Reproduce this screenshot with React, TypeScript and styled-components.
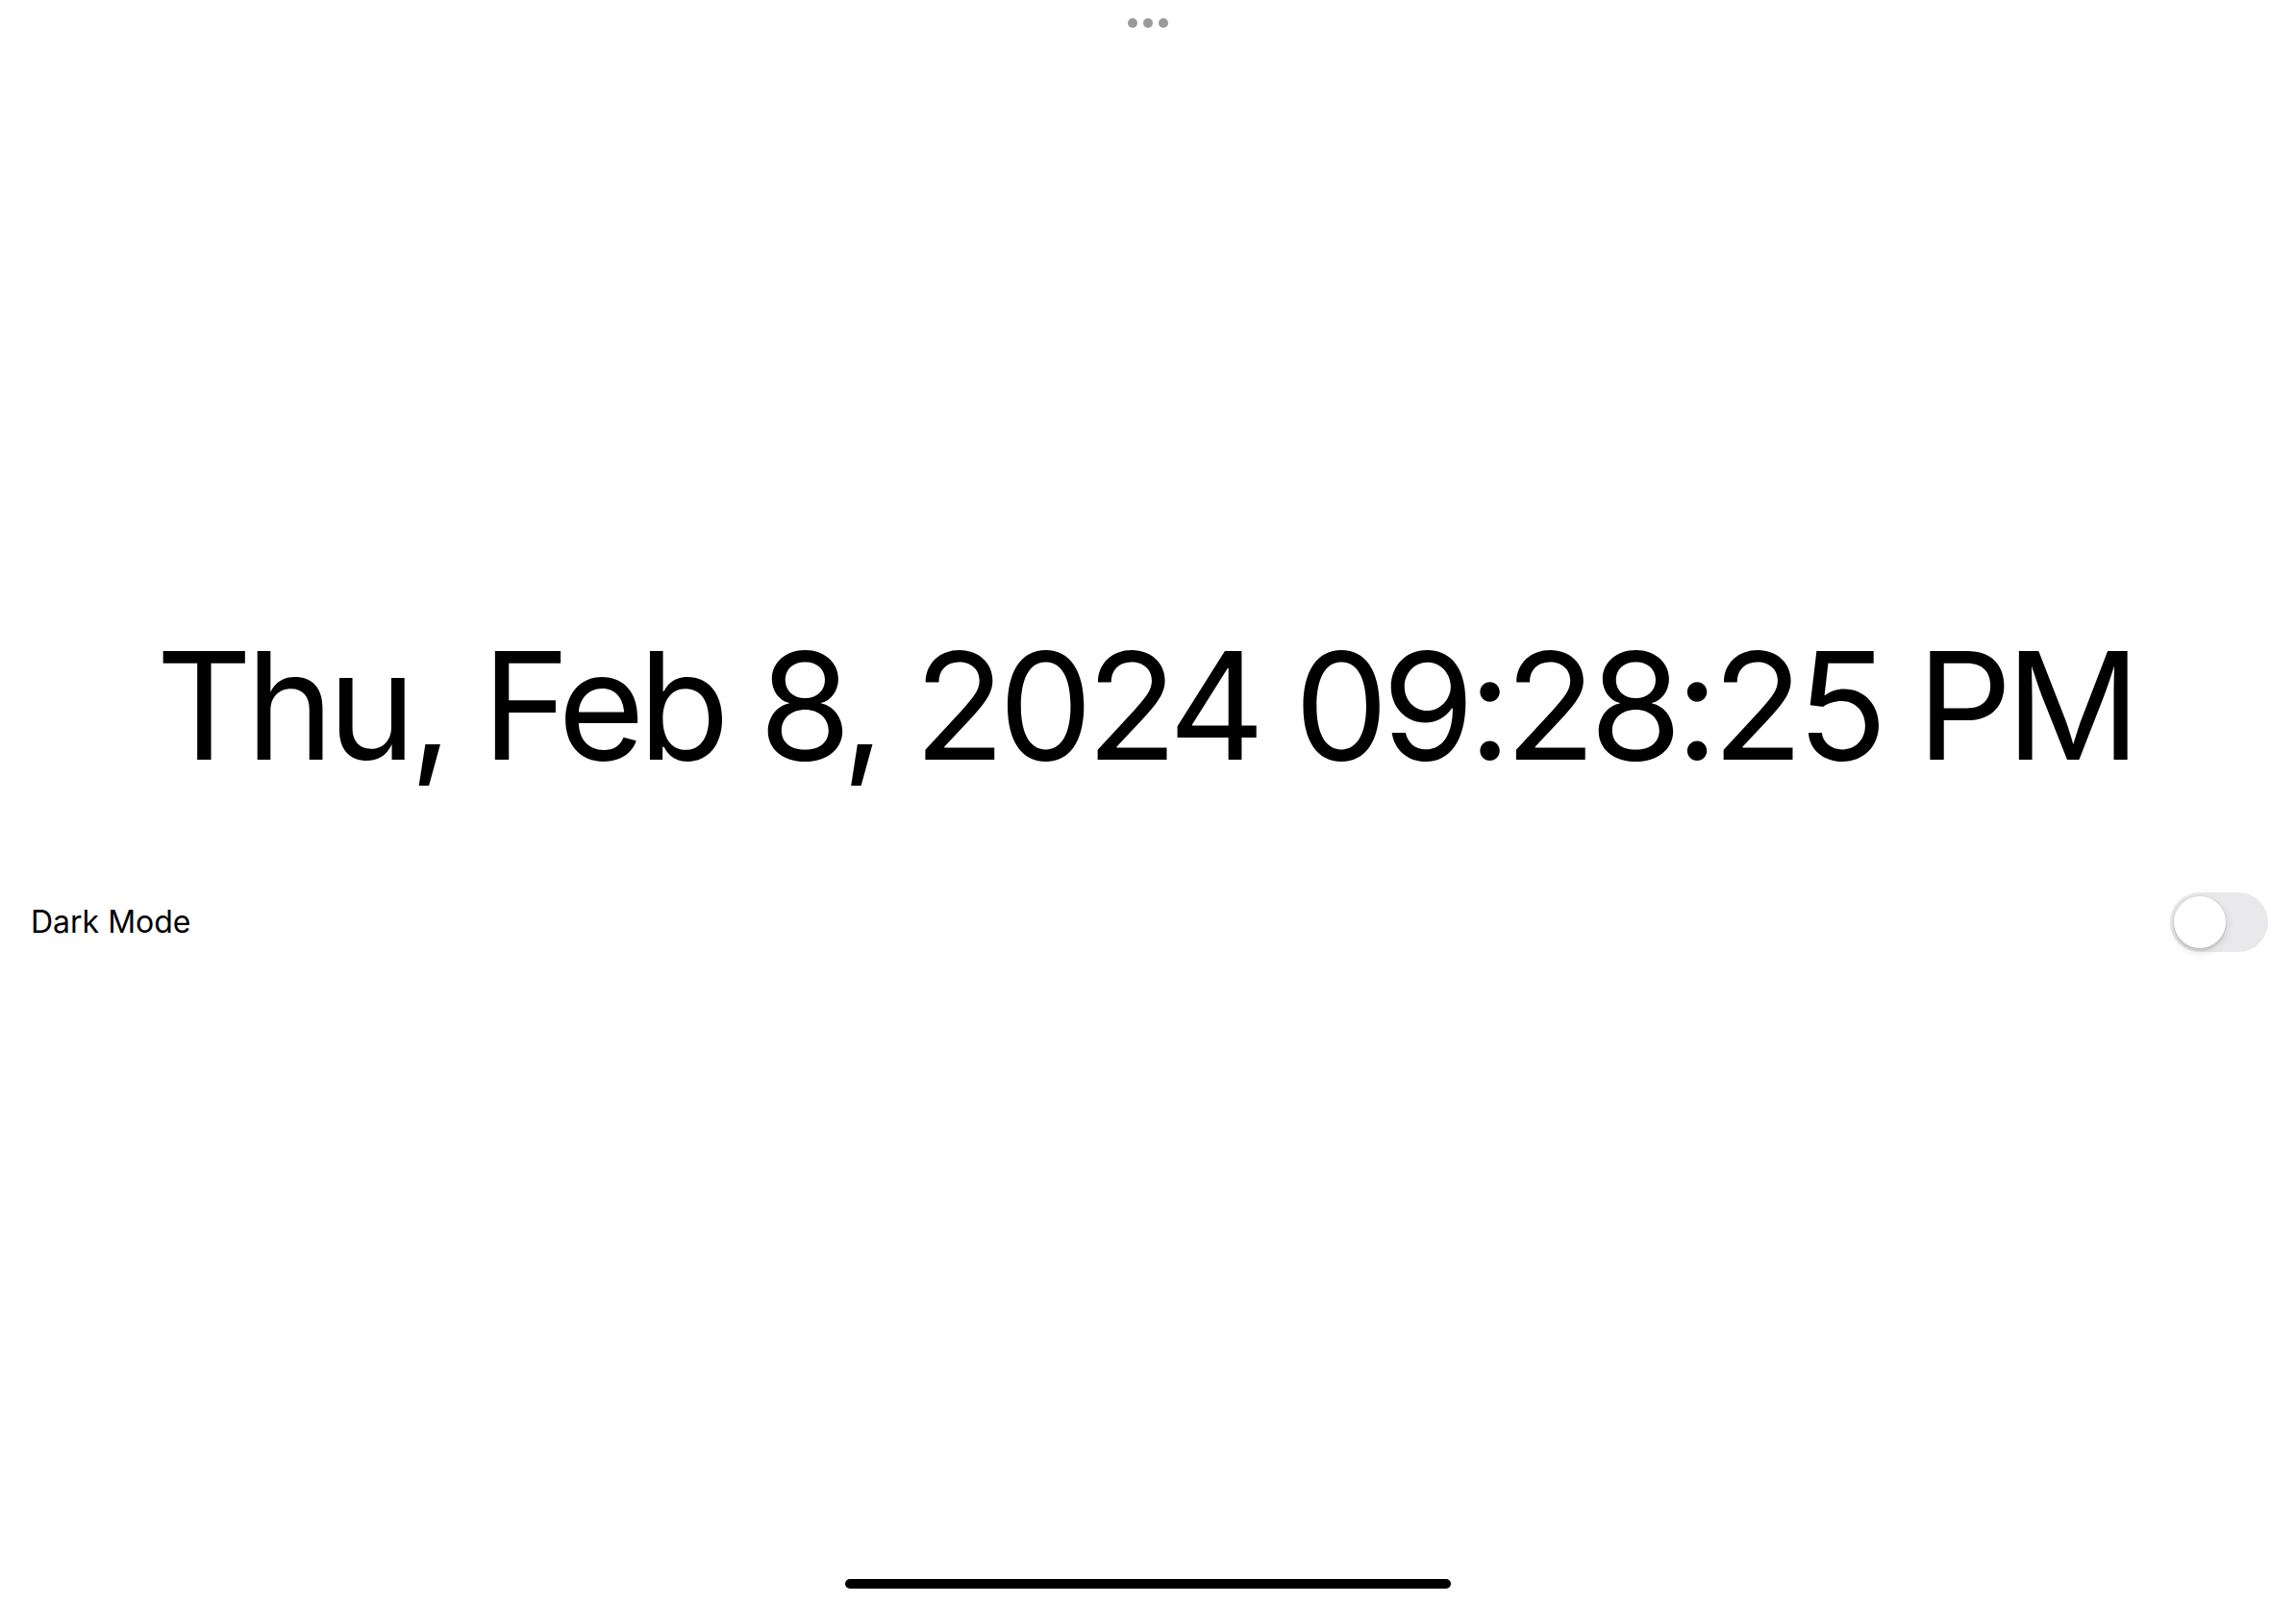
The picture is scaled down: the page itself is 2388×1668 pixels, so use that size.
import React from "react";
import styled, { createGlobalStyle } from "styled-components";

const GlobalStyle = createGlobalStyle`
  html, body {
    margin: 0;
    padding: 0;
    background: #ffffff;
  }
  body {
    font-family: Inter, "Noto Sans", "Liberation Sans", sans-serif;
    color: #000000;
  }
  * { box-sizing: border-box; }
`;

const Screen = styled.div`
  width: 100vw;
  height: 100vh;
  display: flex;
  flex-direction: column;
  background: #ffffff;
  overflow: hidden;
`;

const Handle = styled.div`
  height: 47px;
  display: flex;
  align-items: center;
  justify-content: center;
  gap: 6px;
`;

const Dot = styled.span`
  width: 10px;
  height: 10px;
  border-radius: 50%;
  background: #9a9a9a;
`;

const Content = styled.main`
  display: flex;
  flex-direction: column;
  padding-top: 609px;
`;

const Clock = styled.h1<{ $tracking: number }>`
  margin: 0;
  font-family: Inter, "Noto Sans", sans-serif;
  font-weight: 400;
  font-size: 155px;
  line-height: 1;
  height: 155px;
  text-align: center;
  white-space: nowrap;
  letter-spacing: ${(p) => p.$tracking}px;
  padding-right: 6px;
`;

const SettingRow = styled.div`
  margin-top: 117px;
  display: flex;
  align-items: center;
  justify-content: space-between;
  padding: 0 29px 0 32px;
  height: 62px;
`;

const Label = styled.span`
  font-family: Inter, "Noto Sans", sans-serif;
  font-size: 32px;
  font-weight: 400;
  color: #000;
  margin-top: -2px;
`;

const Track = styled.button<{ $on: boolean }>`
  position: relative;
  width: 102px;
  height: 62px;
  border: none;
  padding: 0;
  border-radius: 31px;
  background: ${(p) => (p.$on ? "#34c759" : "#e9e9eb")};
  cursor: pointer;
`;

const Knob = styled.span<{ $on: boolean }>`
  position: absolute;
  top: 4px;
  left: ${(p) => (p.$on ? "44px" : "4px")};
  width: 54px;
  height: 54px;
  border-radius: 50%;
  background: #ffffff;
  box-shadow: 0 0 0 1px rgba(0, 0, 0, 0.04), 0 3px 8px rgba(0, 0, 0, 0.15),
    0 3px 1px rgba(0, 0, 0, 0.06);
`;

const Footer = styled.div`
  margin-top: auto;
  display: flex;
  justify-content: center;
  padding-bottom: 16px;
`;

const HomeIndicator = styled.div`
  width: 630px;
  height: 10px;
  border-radius: 5px;
  background: #000000;
`;

export default function App() {
  const [dark, setDark] = React.useState(false);
  return (
    <>
      <GlobalStyle />
      <Screen>
        <Handle>
          <Dot />
          <Dot />
          <Dot />
        </Handle>
        <Content>
          <Clock $tracking={-6.5}>Thu, Feb 8, 2024 09:28:25 PM</Clock>
          <SettingRow>
            <Label>Dark Mode</Label>
            <Track $on={dark} onClick={() => setDark(!dark)} aria-label="Dark Mode">
              <Knob $on={dark} />
            </Track>
          </SettingRow>
        </Content>
        <Footer>
          <HomeIndicator />
        </Footer>
      </Screen>
    </>
  );
}
